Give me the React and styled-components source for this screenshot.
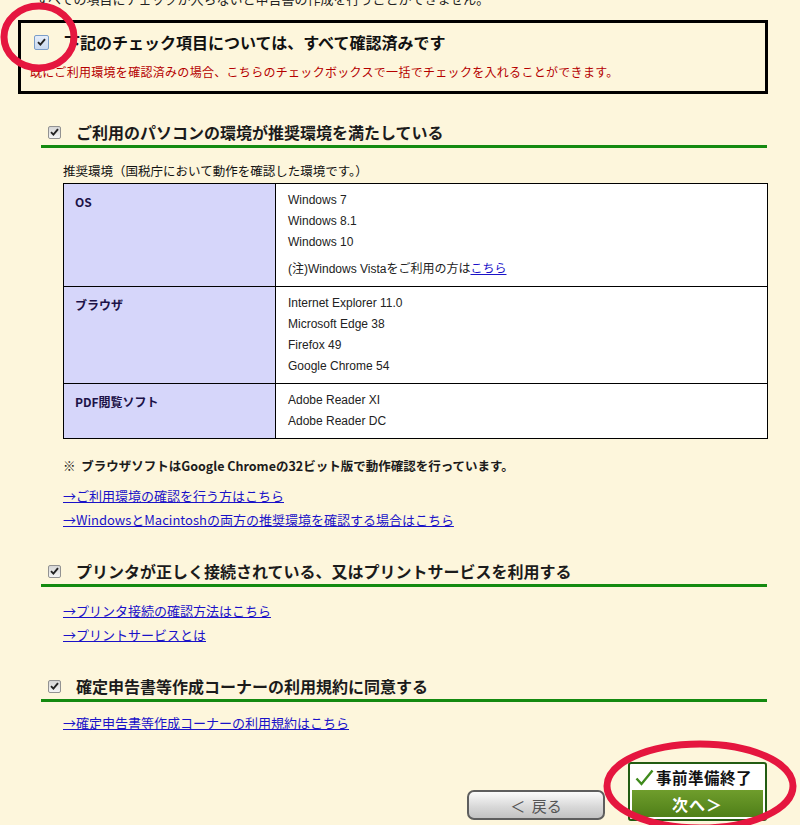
import * as React from 'react';
import styled, { createGlobalStyle } from 'styled-components';

const GlobalStyle = createGlobalStyle`
  html, body {
    margin: 0;
    padding: 0;
    background: #fdf6dc;
  }
  body {
    font-family: "Noto Sans CJK JP", sans-serif;
    color: #111;
  }
`;

const environment = [
  {
    label: 'OS',
    items: ['Windows 7', 'Windows 8.1', 'Windows 10'],
    note: true
  },
  {
    label: 'ブラウザ',
    items: ['Internet Explorer 11.0', 'Microsoft Edge 38', 'Firefox 49', 'Google Chrome 54']
  },
  {
    label: 'PDF閲覧ソフト',
    items: ['Adobe Reader XI', 'Adobe Reader DC']
  }
];

const Check = ({ focused }) => (
  <Box focused={focused}>
    <svg width="9" height="8" viewBox="0 0 9 8">
      <path d="M1 4.2 L3.4 6.6 L8 1.2" fill="none" stroke="#222" strokeWidth="1.9" />
    </svg>
  </Box>
);

const App = () => (
  <Page>
    <GlobalStyle />
    <CutLine>すべての項目にチェックが入らないと申告書の作成を行うことができません。</CutLine>

    <ConfirmBox>
      <ConfirmHead>
        <Check focused />
        <span>下記のチェック項目については、すべて確認済みです</span>
      </ConfirmHead>
      <RedNote>既にご利用環境を確認済みの場合、こちらのチェックボックスで一括でチェックを入れることができます。</RedNote>
    </ConfirmBox>

    <Section gap="28px">
      <SectionHead>
        <Check />
        <span>ご利用のパソコンの環境が推奨環境を満たしている</span>
      </SectionHead>
      <Body>
        <Caption>推奨環境（国税庁において動作を確認した環境です。）</Caption>
        <EnvTable>
          <tbody>
            {environment.map(row => (
              <tr key={row.label}>
                <LabelCell>{row.label}</LabelCell>
                <ValueCell>
                  {row.items.map(item => (
                    <div key={item}>{item}</div>
                  ))}
                  {row.note && (
                    <Note>
                      (注)Windows Vistaをご利用の方は<Link href="#">こちら</Link>
                    </Note>
                  )}
                </ValueCell>
              </tr>
            ))}
          </tbody>
        </EnvTable>
        <Remark>※&nbsp; ブラウザソフトはGoogle Chromeの32ビット版で動作確認を行っています。</Remark>
        <Links gap="9px">
          <Link href="#">→ご利用環境の確認を行う方はこちら</Link>
          <Link href="#">→WindowsとMacintoshの両方の推奨環境を確認する場合はこちら</Link>
        </Links>
      </Body>
    </Section>

    <Section gap="29px">
      <SectionHead>
        <Check />
        <span>プリンタが正しく接続されている、又はプリントサービスを利用する</span>
      </SectionHead>
      <Body>
        <Links gap="12px">
          <Link href="#">→プリンタ接続の確認方法はこちら</Link>
          <Link href="#">→プリントサービスとは</Link>
        </Links>
      </Body>
    </Section>

    <Section gap="29px">
      <SectionHead>
        <Check />
        <span>確定申告書等作成コーナーの利用規約に同意する</span>
      </SectionHead>
      <Body>
        <Links gap="9px">
          <Link href="#">→確定申告書等作成コーナーの利用規約はこちら</Link>
        </Links>
      </Body>
    </Section>

    <ButtonRow>
      <BackButton>＜&nbsp;&nbsp;戻る</BackButton>
      <NextButton>
        <NextTop>
          <svg width="19" height="17" viewBox="0 0 19 17">
            <path d="M1.5 9.5 L6.5 15 L17.5 1.5" fill="none" stroke="#3f8a1c" strokeWidth="2.4" />
          </svg>
          事前準備終了
        </NextTop>
        <NextBottom>次へ＞</NextBottom>
      </NextButton>
    </ButtonRow>

    <Marks width="800" height="825" viewBox="0 0 800 825">
      <ellipse cx="39" cy="37" rx="35" ry="31" fill="none" stroke="#e5163f" strokeWidth="7" />
      <ellipse cx="700" cy="786" rx="93" ry="42" fill="none" stroke="#e5163f" strokeWidth="7" />
    </Marks>
  </Page>
);

const Page = styled.div`
  position: relative;
  width: 800px;
  height: 825px;
  overflow: hidden;
`;

const CutLine = styled.div`
  height: 20px;
  margin-top: -11px;
  padding-left: 36px;
  font-size: 13px;
  line-height: 20px;
  color: #222;
`;

const Box = styled.span`
  display: inline-flex;
  align-items: center;
  justify-content: center;
  flex: none;
  box-sizing: border-box;
  width: ${p => (p.focused ? '15px' : '13px')};
  height: ${p => (p.focused ? '15px' : '13px')};
  border: 1px solid ${p => (p.focused ? '#7b9ec9' : '#929292')};
  border-radius: 2px;
  background: ${p =>
    p.focused
      ? 'linear-gradient(#e6eefa, #c9d9ef)'
      : 'linear-gradient(#d6d6d6, #f4f4f4)'};
`;

const ConfirmBox = styled.div`
  box-sizing: border-box;
  width: 750px;
  margin: 11px 0 0 18px;
  border: 3px solid #000;
  padding: 9px 0 10px 0;
`;

const ConfirmHead = styled.div`
  display: flex;
  align-items: center;
  gap: 15px;
  height: 20px;
  padding-left: 13px;
  font-size: 16px;
  font-weight: bold;
  line-height: 20px;
`;

const RedNote = styled.div`
  height: 18px;
  margin-top: 11px;
  padding-left: 9px;
  font-size: 12px;
  letter-spacing: 0.3px;
  line-height: 18px;
  color: #b50000;
`;

const Section = styled.div`
  width: 726px;
  margin: ${p => p.gap} 0 0 41px;
`;

const SectionHead = styled.div`
  display: flex;
  align-items: center;
  gap: 15px;
  height: 20px;
  padding: 0 0 3px 7px;
  border-bottom: 3px solid #148a10;
  font-size: 16px;
  font-weight: bold;
  line-height: 20px;
  color: #1b1b1b;
`;

const Body = styled.div`
  padding-left: 22px;
`;

const Caption = styled.div`
  height: 18px;
  margin-top: 14px;
  font-size: 12.5px;
  line-height: 18px;
`;

const EnvTable = styled.table`
  width: 705px;
  margin-top: 3px;
  border-collapse: collapse;
  font-size: 12px;
`;

const LabelCell = styled.td`
  width: 189px;
  padding: 9px 11px;
  vertical-align: top;
  border: 1px solid #000;
  background: #d6d6fa;
  color: #1c1248;
  font-weight: bold;
  line-height: 18px;
`;

const ValueCell = styled.td`
  padding: 6px 12px;
  vertical-align: top;
  border: 1px solid #000;
  background: #fff;
  font-family: "Liberation Sans", "Noto Sans CJK JP", sans-serif;
  line-height: 21px;
  color: #222;

  & > div {
    height: 21px;
  }
`;

const Note = styled.div`
  margin-top: 6px;
`;

const Remark = styled.div`
  height: 18px;
  margin-top: 18px;
  font-size: 12.5px;
  font-weight: bold;
  line-height: 18px;
  color: #1b1b1b;
`;

const Links = styled.div`
  display: flex;
  flex-direction: column;
  align-items: flex-start;
  margin-top: ${p => p.gap};
  font-size: 13px;
  line-height: 24px;

  & > a {
    height: 24px;
  }
`;

const Link = styled.a`
  color: #1a12c8;
  text-decoration: underline;
`;

const ButtonRow = styled.div`
  display: flex;
  justify-content: flex-end;
  align-items: flex-end;
  gap: 23px;
  width: 767px;
  margin-top: 27px;
`;

const BackButton = styled.div`
  box-sizing: border-box;
  width: 138px;
  height: 30px;
  margin-bottom: 1px;
  display: flex;
  align-items: center;
  justify-content: center;
  border: 2px solid #5e5e5e;
  border-radius: 7px;
  background: linear-gradient(#fbfbfb, #d9d9d9 55%, #c2c2c2);
  font-size: 15px;
  color: #555;
`;

const NextButton = styled.div`
  box-sizing: border-box;
  width: 139px;
  height: 59px;
  display: flex;
  flex-direction: column;
  border: 2px solid #225c12;
  border-radius: 3px;
  background: #fff;
  overflow: hidden;
`;

const NextTop = styled.div`
  height: 26px;
  display: flex;
  align-items: center;
  gap: 2px;
  padding-left: 5px;
  font-size: 15.5px;
  font-weight: bold;
  color: #111;
  letter-spacing: 0.5px;
`;

const NextBottom = styled.div`
  flex: 1;
  margin: 0 2px 2px;
  display: flex;
  align-items: center;
  justify-content: center;
  background: linear-gradient(#6f9d2c, #4f7f18);
  font-size: 16px;
  font-weight: bold;
  color: #fff;
  letter-spacing: 1px;
`;

const Marks = styled.svg`
  position: absolute;
  left: 0;
  top: 0;
  pointer-events: none;
`;

export default App;
